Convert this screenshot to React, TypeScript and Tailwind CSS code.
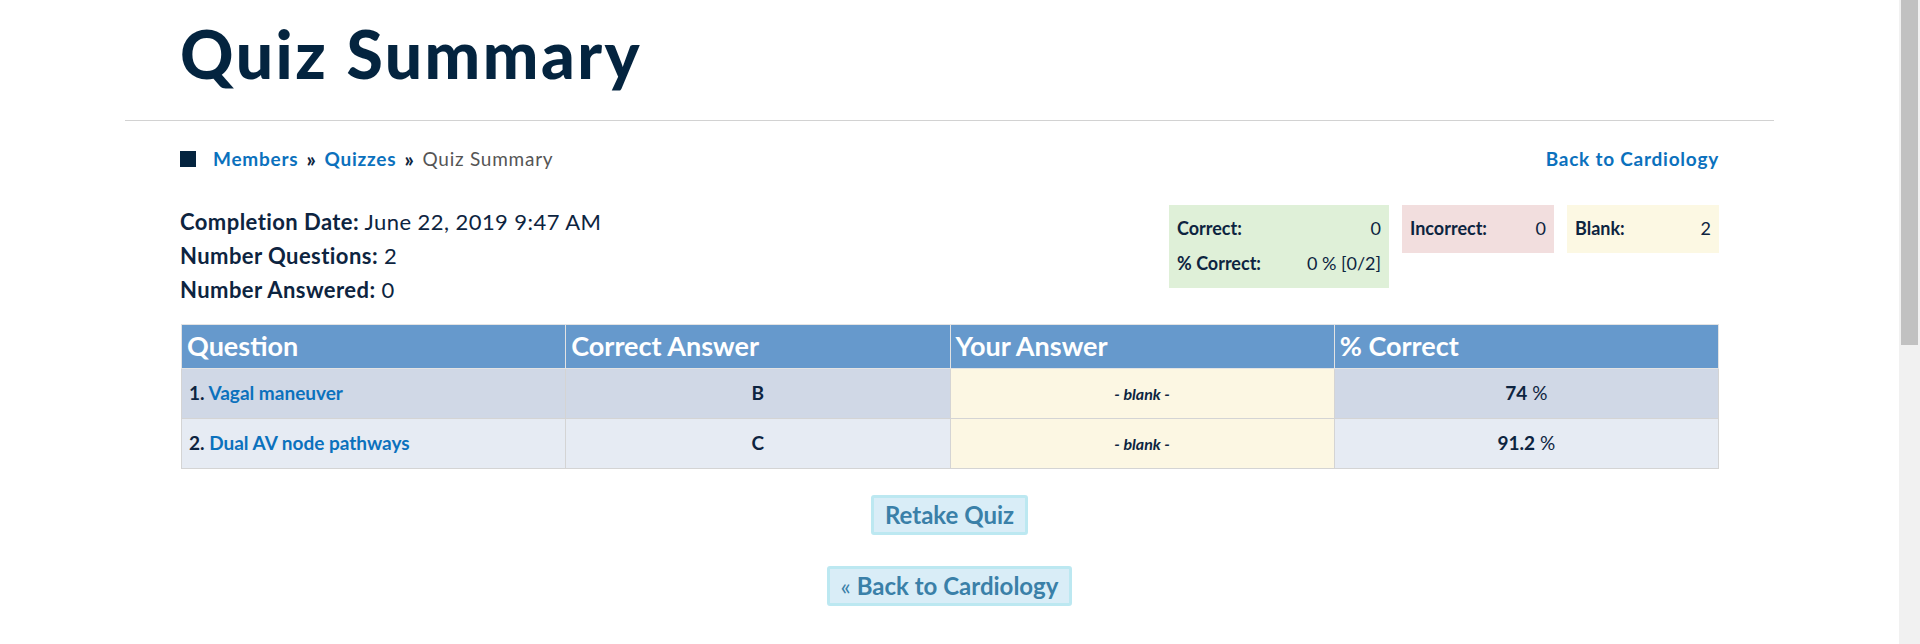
import React from 'react';

type Row = {
  no: number;
  question: string;
  answer: string;
  pct: string;
};

const rows: Row[] = [
  { no: 1, question: 'Vagal maneuver', answer: 'B', pct: '74' },
  { no: 2, question: 'Dual AV node pathways', answer: 'C', pct: '91.2' },
];

const StatBox = ({
  bg,
  width,
  items,
}: {
  bg: string;
  width: string;
  items: { label: string; value: string }[];
}) => (
  <div className={`${bg} ${width} px-[8px] pt-[6px] pb-[7px]`}>
    {items.map((it) => (
      <div key={it.label} className="flex items-center justify-between leading-[35px] text-[18px]">
        <span className="font-bold">{it.label}</span>
        <span className="font-normal">{it.value}</span>
      </div>
    ))}
  </div>
);

export default function App() {
  return (
    <div className="flex h-[644px] w-full overflow-hidden bg-white font-['Lato',sans-serif] text-[#0d2440]">
      <div className="min-w-0 flex-1">
        <div className="mx-auto w-[1649px]">
          <h1 className="pt-[14px] pb-[27px] pl-[55px] text-[66px] font-black leading-[1.2] tracking-[2.5px] text-[#04243f]">
            Quiz Summary
          </h1>
          <div className="h-px bg-[#d2d2d2]" />

          <div className="px-[55px]">
            {/* breadcrumb */}
            <div className="mt-[27px] flex items-center justify-between text-[19px] leading-[22px] tracking-[0.04em]">
              <div className="flex items-center">
                <span className="mr-[17px] inline-block h-[16px] w-[16px] bg-[#04243f]" />
                <a className="font-bold text-[#0b71bd]">Members</a>
                <span className="mx-[8px] text-[20px] font-black text-[#0d2440]">»</span>
                <a className="font-bold text-[#0b71bd]">Quizzes</a>
                <span className="mx-[8px] text-[20px] font-black text-[#0d2440]">»</span>
                <span className="text-[#555]">Quiz Summary</span>
              </div>
              <a className="font-bold text-[#0b71bd]">Back to Cardiology</a>
            </div>

            {/* info + stats */}
            <div className="mt-[35px] flex items-start justify-between">
              <div className="text-[22px] leading-[34px] tracking-[0.02em]">
                <div>
                  <span className="font-bold">Completion Date:</span> June 22, 2019 9:47 AM
                </div>
                <div>
                  <span className="font-bold">Number Questions:</span> 2
                </div>
                <div>
                  <span className="font-bold">Number Answered:</span> 0
                </div>
              </div>
              <div className="flex items-start gap-[13px]">
                <StatBox
                  bg="bg-[#dff0d8]"
                  width="w-[220px]"
                  items={[
                    { label: 'Correct:', value: '0' },
                    { label: '% Correct:', value: '0 % [0/2]' },
                  ]}
                />
                <StatBox bg="bg-[#f2dede]" width="w-[152px]" items={[{ label: 'Incorrect:', value: '0' }]} />
                <StatBox bg="bg-[#fcf8e3]" width="w-[152px]" items={[{ label: 'Blank:', value: '2' }]} />
              </div>
            </div>

            {/* table */}
            <table className="mt-[17px] ml-px w-[1538px] table-fixed border-collapse border border-[#d4d4d4]">
              <thead>
                <tr className="h-[44px] bg-[#6699cc] text-left text-[27px] font-bold text-white">
                  <th className="border border-[#e3e3e3] px-[5px]">Question</th>
                  <th className="border border-[#e3e3e3] px-[5px]">Correct Answer</th>
                  <th className="border border-[#e3e3e3] px-[5px]">Your Answer</th>
                  <th className="border border-[#e3e3e3] px-[5px]">% Correct</th>
                </tr>
              </thead>
              <tbody>
                {rows.map((r, i) => (
                  <tr
                    key={r.no}
                    className={`h-[50px] text-[19px] ${i % 2 === 0 ? 'bg-[#d0d8e6]' : 'bg-[#e6ebf3]'}`}
                  >
                    <td className="border border-[#d4d4d4] px-[7px] font-bold">
                      {r.no}. <a className="text-[#0b71bd]">{r.question}</a>
                    </td>
                    <td className="border border-[#d4d4d4] text-center font-bold">{r.answer}</td>
                    <td className="border border-[#d4d4d4] bg-[#fcf7e3] text-center text-[16px] font-bold italic">
                      - blank -
                    </td>
                    <td className="border border-[#d4d4d4] text-center">
                      <span className="font-bold">{r.pct}</span> %
                    </td>
                  </tr>
                ))}
              </tbody>
            </table>

            {/* actions */}
            <div className="mt-[26px] flex flex-col items-center gap-[31px]">
              <button className="rounded-[3px] border-[3px] border-[#bce8f1] bg-[#d9edf7] px-[11px] py-[1px] text-[24px] leading-[32px] font-bold text-[#3a80a8]">
                Retake Quiz
              </button>
              <button className="rounded-[3px] border-[3px] border-[#bce8f1] bg-[#d9edf7] px-[11px] py-[1px] text-[24px] leading-[32px] font-bold text-[#3a80a8]">
                <span className="font-normal">«</span> Back to Cardiology
              </button>
            </div>
          </div>
        </div>
      </div>

      {/* scrollbar */}
      <div className="h-full w-[21px] shrink-0 bg-[#f1f1f1] px-[2px]">
        <div className="h-[345px] bg-[#c1c1c1]" />
      </div>
    </div>
  );
}
